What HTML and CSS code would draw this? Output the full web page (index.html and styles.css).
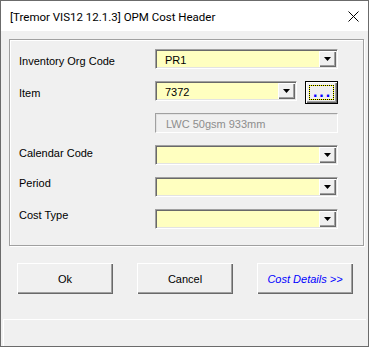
FILE: index.html
```html
<!DOCTYPE html>
<html lang="en">
<head>
    <meta charset="UTF-8">
    <title>[Tremor VIS12 12.1.3] OPM Cost Header</title>
    <link rel="stylesheet" href="styles.css">
</head>
<body>

<div class="window">
    <div class="titlebar">
        <span class="title">[Tremor VIS12 12.1.3] OPM Cost Header</span>
        <span class="close">
            <svg width="11" height="11" viewBox="0 0 11 11">
                <path d="M0.5 0.5 L10.5 10.5 M10.5 0.5 L0.5 10.5" stroke="#000" stroke-width="1" fill="none"/>
            </svg>
        </span>
    </div>

    <div class="client">
        <div class="frame">
            <div class="form">
                <span class="label">Inventory Org Code</span>
                <div class="combo">
                    <span class="value">PR1</span>
                    <span class="drop"><svg width="7" height="4" viewBox="0 0 7 4"><polygon points="0,0 7,0 3.5,4" fill="#000"/></svg></span>
                </div>

                <span class="label">Item</span>
                <div class="item-row">
                    <div class="combo combo-short">
                        <span class="value">7372</span>
                        <span class="drop"><svg width="7" height="4" viewBox="0 0 7 4"><polygon points="0,0 7,0 3.5,4" fill="#000"/></svg></span>
                    </div>
                    <button class="ellipsis"><span class="focus">...</span></button>
                </div>

                <span class="label"></span>
                <div class="textbox">LWC 50gsm 933mm</div>

                <span class="label label-mid">Calendar Code</span>
                <div class="combo">
                    <span class="value"></span>
                    <span class="drop"><svg width="7" height="4" viewBox="0 0 7 4"><polygon points="0,0 7,0 3.5,4" fill="#000"/></svg></span>
                </div>

                <span class="label label-high">Period</span>
                <div class="combo">
                    <span class="value"></span>
                    <span class="drop"><svg width="7" height="4" viewBox="0 0 7 4"><polygon points="0,0 7,0 3.5,4" fill="#000"/></svg></span>
                </div>

                <span class="label label-high">Cost Type</span>
                <div class="combo">
                    <span class="value"></span>
                    <span class="drop"><svg width="7" height="4" viewBox="0 0 7 4"><polygon points="0,0 7,0 3.5,4" fill="#000"/></svg></span>
                </div>
            </div>
        </div>

        <div class="buttons">
            <button class="btn">Ok</button>
            <button class="btn">Cancel</button>
            <button class="btn btn-details">Cost Details &gt;&gt;</button>
        </div>

        <div class="statusbar"></div>
    </div>
</div>

</body>
</html>
```

FILE: styles.css
```css
* {
    box-sizing: border-box;
    margin: 0;
    padding: 0;
}
body {
    background: #f0f0f0;
}
.window {
    width: 369px;
    height: 347px;
    border: 1px solid #6b6b6b;
    display: flex;
    flex-direction: column;
    background: #f0f0f0;
    font-family: "Liberation Sans", Arial, sans-serif;
    font-size: 11px;
    color: #000;
}
.titlebar {
    height: 30px;
    background: #fff;
    display: flex;
    align-items: center;
    justify-content: space-between;
    padding: 0 9px 0 9px;
}
.title {
    font-family: Roboto, "Liberation Sans", sans-serif;
    font-size: 11.5px;
    padding-top: 1px;
}
.close {
    display: flex;
    width: 11px;
    height: 11px;
}
.client {
    flex: 1;
    display: flex;
    flex-direction: column;
}
.frame {
    width: 355px;
    height: 207px;
    margin: 8px 0 0 8px;
    border: 1px solid #a0a0a0;
    box-shadow: inset 1px 1px #fff, 1px 1px #fff;
    padding: 9px 0 0 9px;
}
.form {
    display: grid;
    grid-template-columns: 136px 183px;
    grid-auto-rows: 20px;
    row-gap: 12px;
}
.label {
    line-height: 20px;
    padding-top: 2px;
    white-space: nowrap;
}
.label-mid {
    padding-top: 0;
    margin-top: -2px;
}
.label-high {
    padding-top: 0;
    margin-top: -4px;
}
.combo {
    display: flex;
    width: 183px;
    height: 20px;
    background: #ffffc0;
    border: 1px solid;
    border-color: #a0a0a0 #fff #fff #a0a0a0;
    box-shadow: inset 1px 1px #696969, inset -1px -1px #e3e3e3;
    padding: 1px;
}
.combo-short {
    width: 143px;
}
.value {
    flex: 1;
    padding-left: 8px;
    line-height: 19px;
    white-space: nowrap;
}
.drop {
    width: 17px;
    height: 16px;
    display: flex;
    align-items: center;
    justify-content: center;
    background: #f0f0f0;
    box-shadow: inset 1px 1px #fff, inset -1px -1px #696969, inset -2px -2px #a0a0a0;
    padding: 0 1px 0 0;
}
.drop svg {
    display: block;
}
.item-row {
    display: flex;
    align-items: flex-start;
}
.ellipsis {
    width: 33px;
    height: 23px;
    margin-left: 8px;
    border: 1px solid #000;
    background: #f0f0f0;
    box-shadow: inset 1px 1px #fff, inset -1px -1px #696969, inset -2px -2px #a0a0a0;
    padding: 3px;
    display: flex;
    font-family: inherit;
}
.focus {
    flex: 1;
    border: 1px solid #ffff00;
    outline: 1px dotted #000;
    outline-offset: -1px;
    color: #0000ff;
    font-size: 16px;
    font-weight: bold;
    letter-spacing: 2px;
    line-height: 11px;
    text-align: center;
    padding-left: 2px;
}
.textbox {
    width: 183px;
    height: 20px;
    border: 1px solid;
    border-color: #a0a0a0 #fff #fff #a0a0a0;
    box-shadow: inset 1px 1px #e3e3e3;
    padding-left: 10px;
    line-height: 21px;
    color: #8d8d8d;
}
.buttons {
    display: flex;
    gap: 24px;
    padding-left: 16px;
    margin-top: 17px;
}
.btn {
    width: 96px;
    height: 31px;
    border: none;
    background: #f0f0f0;
    box-shadow: inset 1px 1px #fff, inset -1px -1px #696969, inset -2px -2px #a0a0a0;
    font-family: inherit;
    font-size: 11px;
    color: #000;
}
.btn-details {
    color: #0000ff;
    font-style: italic;
}
.statusbar {
    flex: 1;
    margin: 25px 2px 0 2px;
    border-top: 1px solid #fff;
    border-left: 1px solid #fff;
}
```
